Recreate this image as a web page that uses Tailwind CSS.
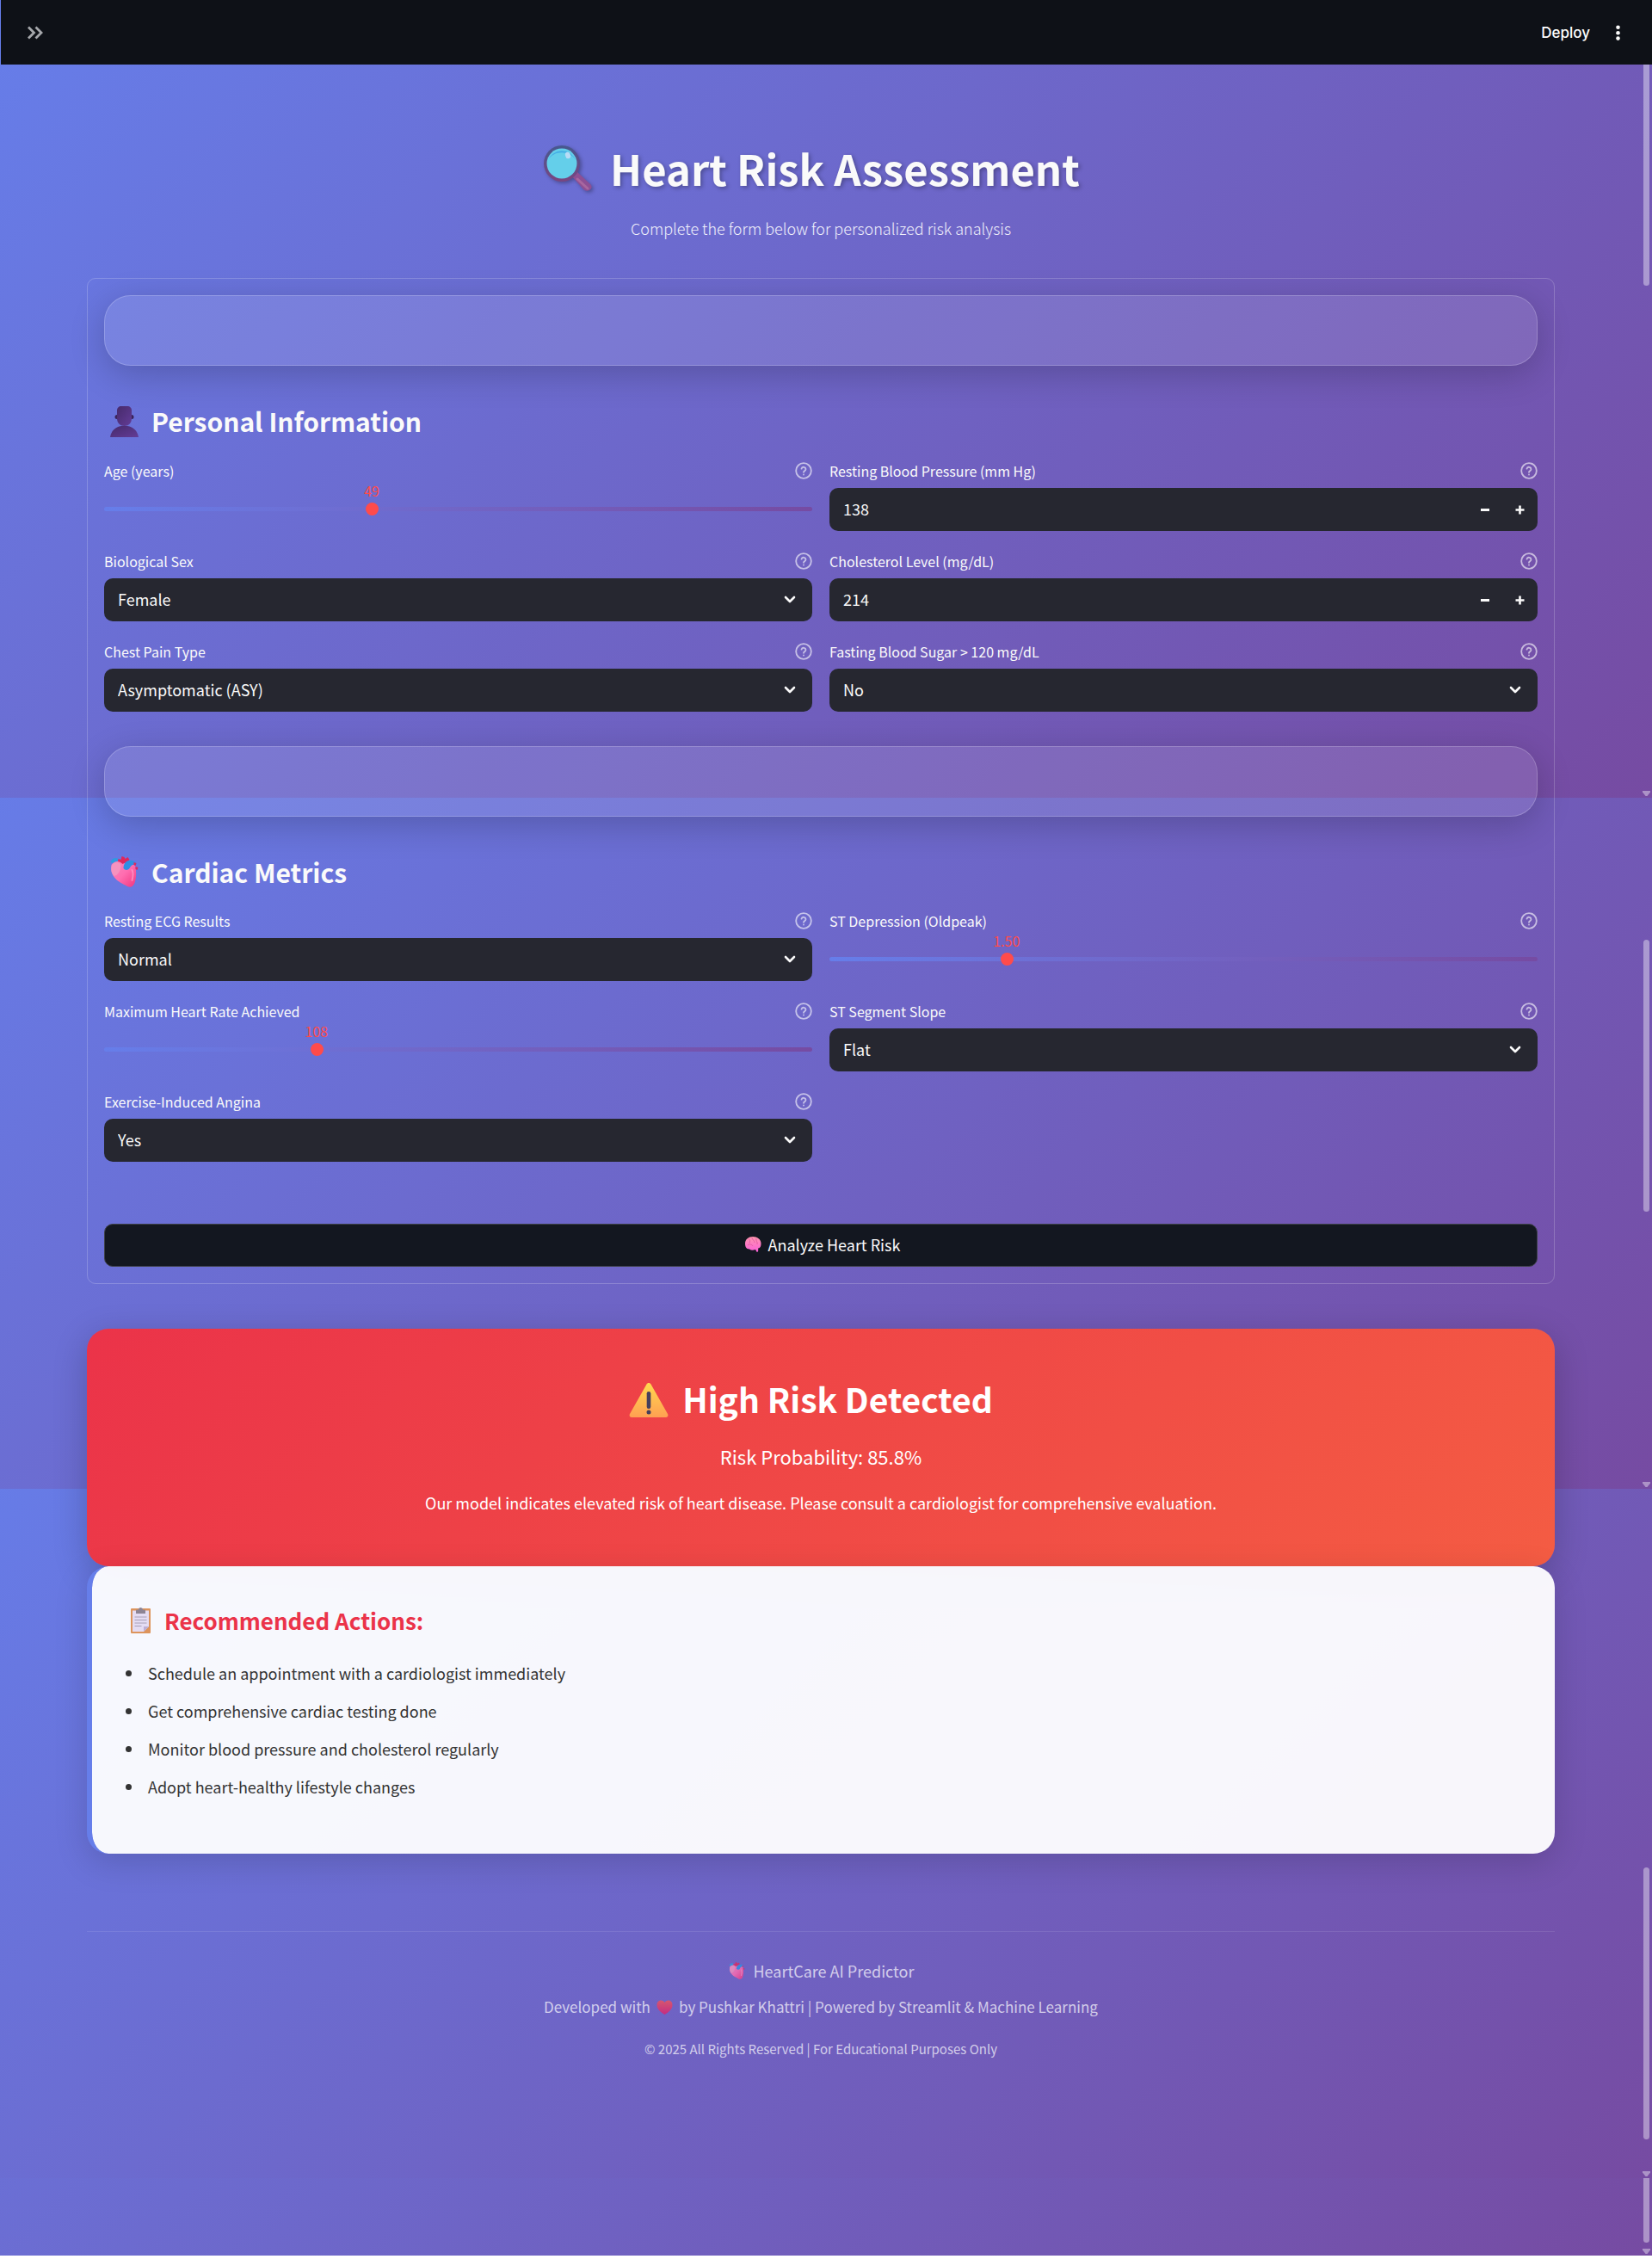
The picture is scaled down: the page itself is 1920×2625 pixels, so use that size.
<!DOCTYPE html>
<html lang="en">
<head>
<meta charset="utf-8">
<meta name="viewport" content="width=device-width, initial-scale=1">
<title>Heart Risk Assessment</title>
<script src="https://cdn.jsdelivr.net/npm/@tailwindcss/browser@4"></script>
</head>
<body class="bg-white font-['Noto_Sans_CJK_SC','Noto_Sans',sans-serif] text-[#fafafa]">

<!-- Shared symbols -->
<svg class="absolute h-0 w-0" aria-hidden="true">
  <defs>
    <linearGradient id="heartFill" x1="0" y1="0" x2="1" y2="1"><stop offset="0" stop-color="#f58bc0"/><stop offset=".5" stop-color="#ff6db0"/><stop offset="1" stop-color="#f0357f"/></linearGradient>
    <linearGradient id="bustFill" x1="0" y1="0" x2="1" y2="1"><stop offset="0" stop-color="#462a6b"/><stop offset="1" stop-color="#633c96"/></linearGradient>
    <linearGradient id="warnFill" x1="0" y1="0" x2="0" y2="1"><stop offset="0" stop-color="#ffd84f"/><stop offset="1" stop-color="#ffa052"/></linearGradient>
    <linearGradient id="brainFill" x1="0" y1="0" x2="0" y2="1"><stop offset="0" stop-color="#ff96b0"/><stop offset="1" stop-color="#fa5fd8"/></linearGradient>
    <linearGradient id="loveFill" x1="0" y1="0" x2="0" y2="1"><stop offset="0" stop-color="#f0545a"/><stop offset="1" stop-color="#d91f73"/></linearGradient>
    <linearGradient id="rimFill" x1="0" y1="0" x2="0" y2="1"><stop offset="0" stop-color="#46588f"/><stop offset="1" stop-color="#7a4580"/></linearGradient>
  </defs>
  <symbol id="help" viewBox="0 0 24 24"><g fill="none" stroke="currentColor" stroke-width="2.200" stroke-linecap="round" stroke-linejoin="round"><circle cx="12" cy="12" r="10.600"/><path d="M9 9.200a3 3 0 0 1 5.900.9c0 2-2.900 2.500-2.900 4"/><path d="M12 17.400h.01"/></g></symbol>
  <symbol id="chevron" viewBox="0 0 14 10"><path d="M2 2l5 5 5-5" fill="none" stroke="currentColor" stroke-width="2.600" stroke-linecap="round" stroke-linejoin="round"/></symbol>
  <symbol id="organ" viewBox="0 0 32 36">
    <path d="M0 7c1-5 6-6 9-4l-3 6z" fill="#2f9be0"/>
    <path d="M9 3l3 1 1-4 3 1 1 2 3-2 2 3-4 4-3 5-7-3z" fill="#e0275c"/>
    <path d="M1 10c4-5 9-5 13-1 5-3 13-2 15 3 1 7 1 13-1 19-2 5-6 6-10 3C10 30-1 25 1 10z" fill="url(#heartFill)"/>
    <path d="M1 12c2-6 9-6 11-2 0 6-3 12-8 13-3-3-4-7-3-11z" fill="#f596bf" opacity=".85"/>
    <path d="M15 14c0-7 5-10 10-9 4 1 5 3 5 5-4-1-6 0-8 4-1 2-5 3-7 0z" fill="#2f8fe3"/>
    <path d="M27 7l3 1-1 3-2-1zM29 12l3 1-1 3-2-1z" fill="#e0275c"/>
    <path d="M25 16c2 4 1 8 0 12" fill="none" stroke="#ffa6d2" stroke-width="2" stroke-linecap="round" opacity=".6"/>
  </symbol>
</svg>

<div class="relative isolate">

  <!-- Backdrop bands, each ending in its own scroll track -->
  <div class="absolute inset-0 -z-10 flex flex-col" aria-hidden="true">
    <div class="relative h-[927px] bg-[linear-gradient(135deg,#667eea_0%,#764ba2_100%)] bg-[size:100%_927px] bg-bottom">
      <div class="absolute right-[3px] top-4 h-[316px] w-[7px] rounded-full bg-white/40"></div>
      <svg class="absolute bottom-[2px] right-[2px] h-[6px] w-[9px] text-white/40" viewBox="0 0 9 6"><path d="M0 0h9v1.500L5.500 6h-2L0 1.500z" fill="currentColor"/></svg>
    </div>
    <div class="relative h-[803px] bg-[linear-gradient(135deg,#667eea_0%,#764ba2_100%)] bg-[size:100%_927px] bg-bottom">
      <div class="absolute right-[3px] top-[165px] h-[316px] w-[7px] rounded-full bg-white/40"></div>
      <svg class="absolute bottom-[2px] right-[2px] h-[6px] w-[9px] text-white/40" viewBox="0 0 9 6"><path d="M0 0h9v1.500L5.500 6h-2L0 1.500z" fill="currentColor"/></svg>
    </div>
    <div class="relative h-[801px] bg-[linear-gradient(135deg,#667eea_0%,#764ba2_100%)] bg-[size:100%_927px] bg-bottom">
      <div class="absolute bottom-[45px] right-[3px] h-[316px] w-[7px] rounded-full bg-white/40"></div>
      <svg class="absolute bottom-[2px] right-[2px] h-[6px] w-[9px] text-white/40" viewBox="0 0 9 6"><path d="M0 0h9v1.500L5.500 6h-2L0 1.500z" fill="currentColor"/></svg>
    </div>
    <div class="relative flex-1 bg-[linear-gradient(135deg,#667eea_0%,#764ba2_100%)] bg-[size:100%_927px] bg-bottom">
      <div class="absolute bottom-[15px] right-[3px] top-0 w-[7px] rounded-b-full bg-white/40"></div>
      <svg class="absolute bottom-[2px] right-[2px] h-[6px] w-[9px] text-white/40" viewBox="0 0 9 6"><path d="M0 0h9v1.500L5.500 6h-2L0 1.500z" fill="currentColor"/></svg>
    </div>
  </div>

  <header class="flex h-[75px] items-center justify-between border-l border-[#667eea] bg-[#0e1117] pl-[30px] pr-[30px]">
    <button type="button" aria-label="Open sidebar" class="text-[#a6a8ac]">
      <svg class="h-5 w-5" viewBox="0 0 20 20" fill="none" stroke="currentColor" stroke-width="2.800"><path d="M2 3.500l6.500 6.500L2 16.500M10.500 3.500L17 10l-6.500 6.500"/></svg>
    </button>
    <div class="flex items-center gap-[22px]">
      <button type="button" class="font-['Inter',sans-serif] text-[17px] font-medium leading-6 text-white">Deploy</button>
      <button type="button" aria-label="Menu" class="text-[#fafafa]">
        <svg class="h-5 w-5" viewBox="0 0 20 20" fill="currentColor"><circle cx="10.500" cy="3.800" r="2.300"/><circle cx="10.500" cy="10.200" r="2.300"/><circle cx="10.500" cy="16.600" r="2.300"/></svg>
      </button>
    </div>
  </header>

  <main class="pb-[225px] pl-[101px] pr-[113px] pt-[87px]">

    <h1 class="flex items-center justify-center gap-5 pr-[22px] text-[49px] font-bold leading-[66px] [text-shadow:2px_2px_5px_rgba(0,0,0,0.3)]">
      <svg class="mt-[2px] h-[58px] w-[58px] drop-shadow-[2px_2px_2px_rgba(0,0,0,0.3)]" viewBox="0 0 58 58" aria-hidden="true">
        <path d="M34 38l6-5 15 14c3 3 1 6-1 7s-5 1-7-1z" fill="#8d4f94"/>
        <path d="M40 41l12 11" stroke="#a8679f" stroke-width="3" stroke-linecap="round"/>
        <circle cx="22" cy="23" r="21" fill="url(#rimFill)"/>
        <circle cx="22" cy="23" r="17.500" fill="#64cfea"/>
        <path d="M5.500 20a17.500 17.500 0 0 1 33 0c-6-13-27-13-33 0z" fill="#45aee6"/>
        <ellipse cx="29" cy="13.500" rx="3" ry="3.800" fill="#b9dcf6" transform="rotate(-15 29 13.500)"/>
      </svg>
      <span>Heart Risk Assessment</span>
    </h1>
    <p class="mt-[22px] text-center text-lg font-light leading-[30px] text-white/90">Complete the form below for personalized risk analysis</p>

    <form class="mt-[43px] rounded-[10px] border border-white/20 px-[19px] pb-[19px] pt-[19px]">

      <div class="h-[82px] rounded-[31px] border border-white/20 bg-white/10 shadow-[0_10px_40px_rgba(0,0,0,0.2)]"></div>

      <h2 class="mt-[43px] flex items-center gap-[15px] pl-[7px] text-[30px] font-bold leading-[42px]">
        <svg class="mt-[2px] h-9 w-[33px]" viewBox="0 0 33 36" aria-hidden="true">
          <path d="M0 36c1-7 6-12 13-13h7c7 1 12 6 13 13z" fill="url(#bustFill)"/>
          <circle cx="8" cy="12.500" r="2.500" fill="#3b2359"/><circle cx="25" cy="12.500" r="2.500" fill="#3b2359"/>
          <path d="M8 5c0-3 2-5 5-5h7c3 0 5 2 5 5v9c0 6-4 9-8.500 9S8 20 8 14z" fill="url(#bustFill)"/>
        </svg>
        <span>Personal Information</span>
      </h2>

      <div class="mt-[27px] grid grid-cols-2 gap-x-5 gap-y-[25px]">

        <div>
          <div class="flex h-5 items-center justify-between">
            <label for="age" class="text-base leading-5">Age (years)</label>
            <svg class="h-5 w-5 text-white/60" aria-hidden="true"><use href="#help"/></svg>
          </div>
          <div class="relative mt-[10px] h-[50px]">
            <div class="absolute inset-x-0 top-[22px] h-[5px] rounded-full bg-linear-to-r from-[#667eea] to-[#764ba2]"></div>
            <output for="age" class="absolute -top-[7px] -translate-x-1/2 text-base leading-5 text-[#ff4b4b]" style="left:37.8%">49</output>
            <input id="age" type="range" min="18" max="100" value="49" class="absolute -left-[7px] top-[17px] h-[15px] w-[calc(100%+14px)] appearance-none bg-transparent [&::-webkit-slider-thumb]:h-[15px] [&::-webkit-slider-thumb]:w-[15px] [&::-webkit-slider-thumb]:appearance-none [&::-webkit-slider-thumb]:rounded-full [&::-webkit-slider-thumb]:bg-[#ff4b4b]">
          </div>
        </div>

        <div>
          <div class="flex h-5 items-center justify-between">
            <label for="bp" class="text-base leading-5">Resting Blood Pressure (mm Hg)</label>
            <svg class="h-5 w-5 text-white/60" aria-hidden="true"><use href="#help"/></svg>
          </div>
          <div class="mt-[10px] flex h-[50px] overflow-hidden rounded-[10px] bg-[#262730] pr-px">
            <input id="bp" type="text" inputmode="numeric" value="138" class="min-w-0 flex-1 bg-transparent px-4 pb-[2px] text-lg outline-none">
            <button type="button" aria-label="Decrease" class="flex w-10 items-center justify-center"><span class="h-[3px] w-[10px] bg-[#fafafa]"></span></button>
            <button type="button" aria-label="Increase" class="flex w-10 items-center justify-center"><svg class="h-[11px] w-[11px]" viewBox="0 0 11 11"><path d="M5.500.5v10M.5 5.500h10" stroke="#fafafa" stroke-width="2.600"/></svg></button>
          </div>
        </div>

        <div>
          <div class="flex h-5 items-center justify-between">
            <label for="sex" class="text-base leading-5">Biological Sex</label>
            <svg class="h-5 w-5 text-white/60" aria-hidden="true"><use href="#help"/></svg>
          </div>
          <div class="relative mt-[10px]">
            <select id="sex" class="h-[50px] w-full appearance-none rounded-[10px] bg-[#262730] px-4 pb-[2px] text-lg"><option>Female</option><option>Male</option></select>
            <svg class="pointer-events-none absolute right-[19px] top-5 h-[10px] w-[14px]" aria-hidden="true"><use href="#chevron"/></svg>
          </div>
        </div>

        <div>
          <div class="flex h-5 items-center justify-between">
            <label for="chol" class="text-base leading-5">Cholesterol Level (mg/dL)</label>
            <svg class="h-5 w-5 text-white/60" aria-hidden="true"><use href="#help"/></svg>
          </div>
          <div class="mt-[10px] flex h-[50px] overflow-hidden rounded-[10px] bg-[#262730] pr-px">
            <input id="chol" type="text" inputmode="numeric" value="214" class="min-w-0 flex-1 bg-transparent px-4 pb-[2px] text-lg outline-none">
            <button type="button" aria-label="Decrease" class="flex w-10 items-center justify-center"><span class="h-[3px] w-[10px] bg-[#fafafa]"></span></button>
            <button type="button" aria-label="Increase" class="flex w-10 items-center justify-center"><svg class="h-[11px] w-[11px]" viewBox="0 0 11 11"><path d="M5.500.5v10M.5 5.500h10" stroke="#fafafa" stroke-width="2.600"/></svg></button>
          </div>
        </div>

        <div>
          <div class="flex h-5 items-center justify-between">
            <label for="pain" class="text-base leading-5">Chest Pain Type</label>
            <svg class="h-5 w-5 text-white/60" aria-hidden="true"><use href="#help"/></svg>
          </div>
          <div class="relative mt-[10px]">
            <select id="pain" class="h-[50px] w-full appearance-none rounded-[10px] bg-[#262730] px-4 pb-[2px] text-lg"><option>Asymptomatic (ASY)</option></select>
            <svg class="pointer-events-none absolute right-[19px] top-5 h-[10px] w-[14px]" aria-hidden="true"><use href="#chevron"/></svg>
          </div>
        </div>

        <div>
          <div class="flex h-5 items-center justify-between">
            <label for="sugar" class="text-base leading-5">Fasting Blood Sugar &gt; 120 mg/dL</label>
            <svg class="h-5 w-5 text-white/60" aria-hidden="true"><use href="#help"/></svg>
          </div>
          <div class="relative mt-[10px]">
            <select id="sugar" class="h-[50px] w-full appearance-none rounded-[10px] bg-[#262730] px-4 pb-[2px] text-lg"><option>No</option><option>Yes</option></select>
            <svg class="pointer-events-none absolute right-[19px] top-5 h-[10px] w-[14px]" aria-hidden="true"><use href="#chevron"/></svg>
          </div>
        </div>
      </div>

      <div class="mt-10 h-[82px] rounded-[31px] border border-white/20 bg-white/10 shadow-[0_10px_40px_rgba(0,0,0,0.2)]"></div>

      <h2 class="mt-[43px] flex items-center gap-[15px] pl-[7px] text-[30px] font-bold leading-[42px]">
        <svg class="h-9 w-[33px]" aria-hidden="true"><use href="#organ"/></svg>
        <span>Cardiac Metrics</span>
      </h2>

      <div class="mt-[26px] grid grid-cols-2 gap-x-5 gap-y-[25px]">

        <div>
          <div class="flex h-5 items-center justify-between">
            <label for="ecg" class="text-base leading-5">Resting ECG Results</label>
            <svg class="h-5 w-5 text-white/60" aria-hidden="true"><use href="#help"/></svg>
          </div>
          <div class="relative mt-[10px]">
            <select id="ecg" class="h-[50px] w-full appearance-none rounded-[10px] bg-[#262730] px-4 pb-[2px] text-lg"><option>Normal</option></select>
            <svg class="pointer-events-none absolute right-[19px] top-5 h-[10px] w-[14px]" aria-hidden="true"><use href="#chevron"/></svg>
          </div>
        </div>

        <div>
          <div class="flex h-5 items-center justify-between">
            <label for="oldpeak" class="text-base leading-5">ST Depression (Oldpeak)</label>
            <svg class="h-5 w-5 text-white/60" aria-hidden="true"><use href="#help"/></svg>
          </div>
          <div class="relative mt-[10px] h-[50px]">
            <div class="absolute inset-x-0 top-[22px] h-[5px] rounded-full bg-linear-to-r from-[#667eea] to-[#764ba2]"></div>
            <output for="oldpeak" class="absolute -top-[7px] -translate-x-1/2 text-base leading-5 text-[#ff4b4b]" style="left:25%">1.50</output>
            <input id="oldpeak" type="range" min="0" max="6" step="0.1" value="1.5" class="absolute -left-[7px] top-[17px] h-[15px] w-[calc(100%+14px)] appearance-none bg-transparent [&::-webkit-slider-thumb]:h-[15px] [&::-webkit-slider-thumb]:w-[15px] [&::-webkit-slider-thumb]:appearance-none [&::-webkit-slider-thumb]:rounded-full [&::-webkit-slider-thumb]:bg-[#ff4b4b]">
          </div>
        </div>

        <div>
          <div class="flex h-5 items-center justify-between">
            <label for="maxhr" class="text-base leading-5">Maximum Heart Rate Achieved</label>
            <svg class="h-5 w-5 text-white/60" aria-hidden="true"><use href="#help"/></svg>
          </div>
          <div class="relative mt-[10px] h-[50px]">
            <div class="absolute inset-x-0 top-[22px] h-[5px] rounded-full bg-linear-to-r from-[#667eea] to-[#764ba2]"></div>
            <output for="maxhr" class="absolute -top-[7px] -translate-x-1/2 text-base leading-5 text-[#ff4b4b]" style="left:30%">108</output>
            <input id="maxhr" type="range" min="60" max="220" value="108" class="absolute -left-[7px] top-[17px] h-[15px] w-[calc(100%+14px)] appearance-none bg-transparent [&::-webkit-slider-thumb]:h-[15px] [&::-webkit-slider-thumb]:w-[15px] [&::-webkit-slider-thumb]:appearance-none [&::-webkit-slider-thumb]:rounded-full [&::-webkit-slider-thumb]:bg-[#ff4b4b]">
          </div>
        </div>

        <div>
          <div class="flex h-5 items-center justify-between">
            <label for="slope" class="text-base leading-5">ST Segment Slope</label>
            <svg class="h-5 w-5 text-white/60" aria-hidden="true"><use href="#help"/></svg>
          </div>
          <div class="relative mt-[10px]">
            <select id="slope" class="h-[50px] w-full appearance-none rounded-[10px] bg-[#262730] px-4 pb-[2px] text-lg"><option>Flat</option></select>
            <svg class="pointer-events-none absolute right-[19px] top-5 h-[10px] w-[14px]" aria-hidden="true"><use href="#chevron"/></svg>
          </div>
        </div>

        <div>
          <div class="flex h-5 items-center justify-between">
            <label for="angina" class="text-base leading-5">Exercise-Induced Angina</label>
            <svg class="h-5 w-5 text-white/60" aria-hidden="true"><use href="#help"/></svg>
          </div>
          <div class="relative mt-[10px]">
            <select id="angina" class="h-[50px] w-full appearance-none rounded-[10px] bg-[#262730] px-4 pb-[2px] text-lg"><option>Yes</option><option>No</option></select>
            <svg class="pointer-events-none absolute right-[19px] top-5 h-[10px] w-[14px]" aria-hidden="true"><use href="#chevron"/></svg>
          </div>
        </div>
      </div>

      <button type="button" class="mt-[72px] flex h-[50px] w-full items-center justify-center gap-2 rounded-[10px] border border-[#3e4149] bg-[#131720] pb-[2px] pl-[3px] text-lg">
        <svg class="h-5 w-5" viewBox="0 0 20 20" aria-hidden="true">
          <path d="M1 9c0-5 4-8 9-8s9.500 3 9.500 8c0 4-1.500 5.500-3.500 5.500.5 2 .3 4-.8 4.500-1 0-1.200-2-2.200-3-3 1-5 1-7-.500C2 15.500 1 12 1 9z" fill="url(#brainFill)"/>
          <path d="M5 3.500c2 1 2 3 1 5M9 2c0 3 3 3 3 6M14 3c-1 3 2 4 1 7M4 11c2-2 5-1 6 1" stroke="#e0569c" stroke-width=".8" fill="none"/>
        </svg>
        <span>Analyze Heart Risk</span>
      </button>
    </form>

    <section class="mt-[52px] rounded-[25px] bg-[linear-gradient(135deg,#eb3349_0%,#f45c43_100%)] pb-[59px] pt-[54px] text-center text-white shadow-[0_10px_40px_rgba(0,0,0,0.2)]">
      <h2 class="flex items-center justify-center gap-4 pr-[23px] text-[39px] font-bold leading-[54px]">
        <svg class="mt-1 h-[40px] w-[46px]" viewBox="0 0 46 40" aria-hidden="true">
          <path d="M20.500 1.500c1-2 4-2 5 0L45 36c1 2 0 4-2 4H3c-2 0-3-2-2-4z" fill="url(#warnFill)"/>
          <rect x="20.700" y="10" width="4.600" height="20" rx="2.300" fill="#463f5c"/><circle cx="23" cy="34" r="2.500" fill="#463f5c"/>
        </svg>
        <span>High Risk Detected</span>
      </h2>
      <p class="mt-[23px] text-[22px] leading-[34px]">Risk Probability: 85.8%</p>
      <p class="mt-[22px] text-lg leading-[30px]">Our model indicates elevated risk of heart disease. Please consult a cardiologist for comprehensive evaluation.</p>
    </section>

    <section class="rounded-[25px] border-l-[6px] border-[#667eea] bg-white/95 bg-clip-padding pb-[62px] pt-[44px] text-[#333] shadow-[0_10px_38px_rgba(0,0,0,0.15)]">
      <h3 class="flex items-center gap-4 pl-[45px] text-[26px] font-bold leading-[38px] text-[#eb3349]">
        <svg class="h-[30px] w-[23px]" viewBox="0 0 23 30" aria-hidden="true">
          <rect y="1" width="23" height="29" rx="1" fill="#dd945c"/>
          <path d="M2 3.500h19V22l-6 6H2z" fill="#e4dcf3"/><path d="M21 22l-6 6v-6z" fill="#bcaed6"/>
          <path d="M6 3.500a1 1 0 0 1 1-1h2a2.500 2.500 0 0 1 5 0h2a1 1 0 0 1 1 1V7H6z" fill="#8d8494"/>
          <path d="M4.500 11h14M4.500 14.500h14M4.500 18h14M4.500 21.500h8" stroke="#a79fb8" stroke-width="1.200"/>
        </svg>
        <span>Recommended Actions:</span>
      </h3>
      <ul class="mt-[26px] flex list-disc flex-col gap-3 pl-[60px] text-lg leading-8">
        <li class="pl-[5px]">Schedule an appointment with a cardiologist immediately</li>
        <li class="pl-[5px]">Get comprehensive cardiac testing done</li>
        <li class="pl-[5px]">Monitor blood pressure and cholesterol regularly</li>
        <li class="pl-[5px]">Adopt heart-healthy lifestyle changes</li>
      </ul>
    </section>

    <footer class="mt-[90px] border-t border-white/10 pt-[30px] text-center text-[17px] leading-[30px] text-white/70">
      <p class="flex items-center justify-center gap-[9px] pl-[2px] text-lg leading-[30px]"><svg class="h-5 w-[19px] opacity-80" aria-hidden="true"><use href="#organ"/></svg><span>HeartCare AI Predictor</span></p>
      <p class="mt-3 flex items-center justify-center gap-[7px]">
        <span>Developed with</span>
        <svg class="h-[17px] w-[19px] opacity-80" viewBox="0 0 19 17" aria-hidden="true"><path d="M9.500 3C11-.5 18.500-.8 18.500 6c0 5-5 8.500-9 11-4-2.500-9-6-9-11C.5-.8 8-.5 9.500 3z" fill="url(#loveFill)"/></svg>
        <span>by Pushkar Khattri | Powered by Streamlit &amp; Machine Learning</span>
      </p>
      <p class="mt-[19px] text-[15px] leading-[30px]">© 2025 All Rights Reserved | For Educational Purposes Only</p>
    </footer>
  </main>
</div>
</body>
</html>
